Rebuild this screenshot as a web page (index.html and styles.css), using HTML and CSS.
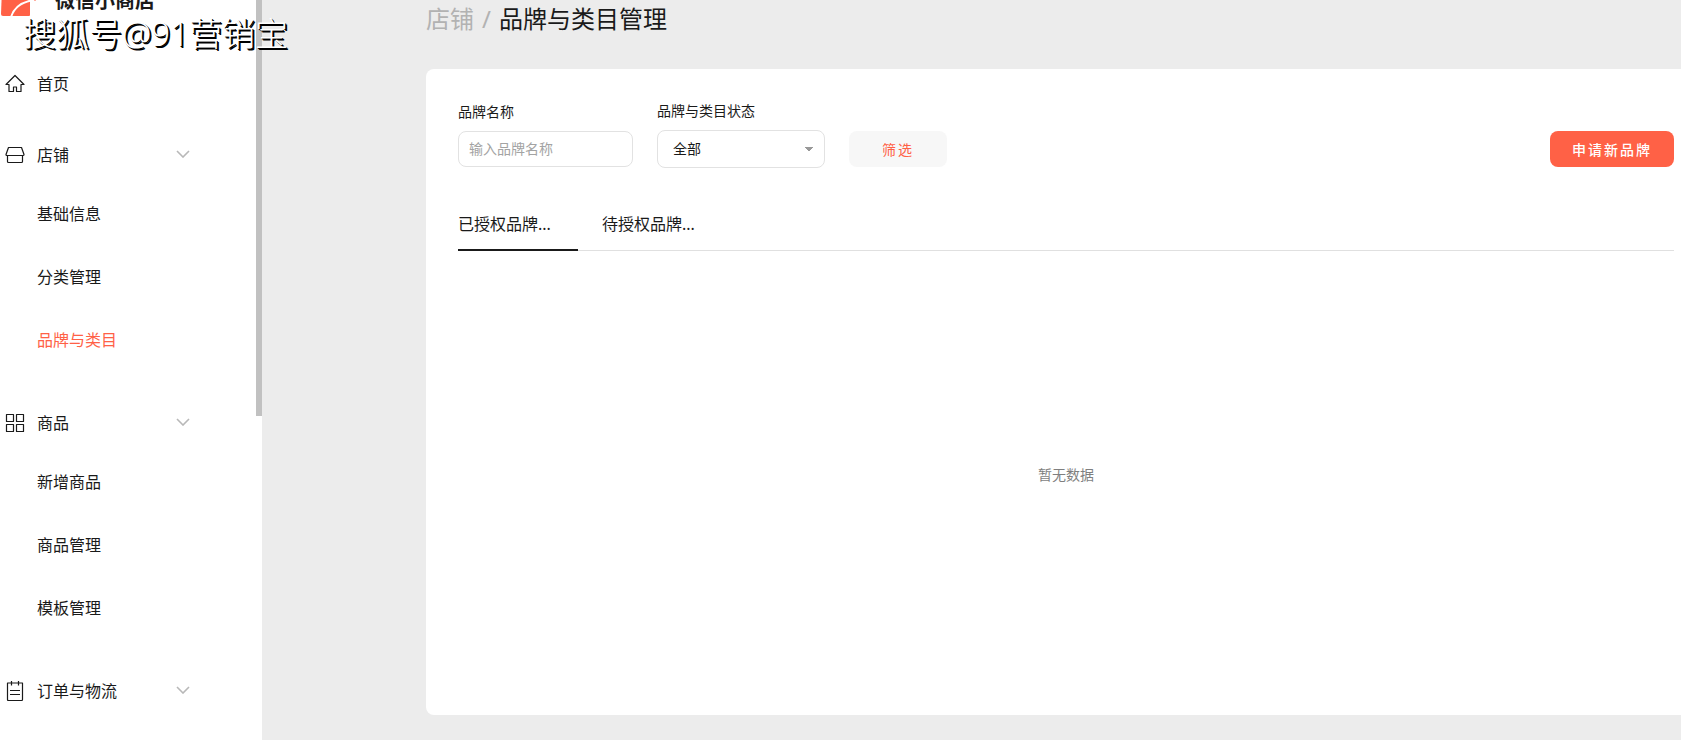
FILE: index.html
```html
<!DOCTYPE html>
<html lang="zh-CN">
<head>
<meta charset="utf-8">
<title>品牌与类目管理</title>
<link rel="stylesheet" href="styles.css">
</head>
<body>
<div class="layout">
  <aside class="sidebar">
    <div class="brand">
      <svg class="brand-logo" width="36" height="32" viewBox="0 0 36 32" aria-hidden="true">
        <path d="M2 4H30V30Q30 31 29 31H3Q1 31 1 29Z" fill="#ff6146"/>
        <path d="M11 32Q15 19 31 15.500" fill="none" stroke="#fff" stroke-width="2"/>
        <path d="M33 14l3 1-1 1z" fill="#ff6146"/>
      </svg>
      <span class="brand-name">微信小商店</span>
    </div>
    <nav class="menu">
      <a class="menu-head" href="#">
        <svg class="icon" width="20" height="20" viewBox="0 0 20 20" aria-hidden="true"><path d="M10 1.500L1 10.500H4V17.500H8.500V13H11.500V17.500H16V10.500H19Z"/></svg>
        <span>首页</span>
      </a>
      <section class="group">
        <button class="menu-head" type="button">
          <svg class="icon" width="20" height="20" viewBox="0 0 20 20" aria-hidden="true"><path d="M3.500 2.500H16.500L19 9.500Q19 10.500 18 10.500H2Q1 10.500 1 9.500ZM2.500 10.500V16.500Q2.500 17.500 3.500 17.500H16.500Q17.500 17.500 17.500 16.500V10.500"/></svg>
          <span>店铺</span>
          <svg class="chevron" width="14" height="8" viewBox="0 0 14 8" aria-hidden="true"><path d="M1 1L7 7L13 1"/></svg>
        </button>
        <ul class="submenu">
          <li><a href="#">基础信息</a></li>
          <li><a href="#">分类管理</a></li>
          <li><a class="active" href="#">品牌与类目</a></li>
        </ul>
      </section>
      <section class="group">
        <button class="menu-head" type="button">
          <svg class="icon" width="20" height="20" viewBox="0 0 20 20" aria-hidden="true"><path d="M1.500 1.500H8.500V8.500H1.500ZM11.500 1.500H18.500V8.500H11.500ZM1.500 11.500H8.500V18.500H1.500ZM11.500 11.500H18.500V18.500H11.500Z"/></svg>
          <span>商品</span>
          <svg class="chevron" width="14" height="8" viewBox="0 0 14 8" aria-hidden="true"><path d="M1 1L7 7L13 1"/></svg>
        </button>
        <ul class="submenu">
          <li><a href="#">新增商品</a></li>
          <li><a href="#">商品管理</a></li>
          <li><a href="#">模板管理</a></li>
        </ul>
      </section>
      <section class="group">
        <button class="menu-head" type="button">
          <svg class="icon" width="20" height="20" viewBox="0 0 20 20" aria-hidden="true"><path d="M2.500 2H17.500V18.500Q17.500 19.500 16.500 19.500H3.500Q2.500 19.500 2.500 18.500ZM6.500 0V4.500M13.500 0V4.500M5 9.500H15M5 13.500H15"/></svg>
          <span>订单与物流</span>
          <svg class="chevron" width="14" height="8" viewBox="0 0 14 8" aria-hidden="true"><path d="M1 1L7 7L13 1"/></svg>
        </button>
      </section>
    </nav>
    <div class="scroll-thumb"></div>
  </aside>
  <main class="main">
    <h1 class="crumbs"><a href="#">店铺</a><span class="slash">/</span><span>品牌与类目管理</span></h1>
    <div class="card">
      <form class="filters">
        <div class="field field-name">
          <label for="brand">品牌名称</label>
          <input id="brand" type="text" placeholder="输入品牌名称">
        </div>
        <div class="field field-state">
          <label for="state">品牌与类目状态</label>
          <select id="state"><option>全部</option></select>
        </div>
        <button class="btn btn-light" type="button">筛选</button>
        <button class="btn btn-primary" type="button">申请新品牌</button>
      </form>
      <div class="tabs" role="tablist">
        <button class="tab selected" type="button" role="tab" aria-selected="true">已授权品牌...</button>
        <button class="tab" type="button" role="tab" aria-selected="false">待授权品牌...</button>
      </div>
      <div class="empty">暂无数据</div>
    </div>
  </main>
</div>
<div class="watermark">搜狐号@91营销宝</div>
</body>
</html>
```
FILE: styles.css
```css
* { box-sizing: border-box; }
body {
  margin: 0;
  background: #ececec;
  color: #1a1a1a;
  font-family: "Noto Sans", "Noto Sans CJK SC", sans-serif;
  font-weight: 400;
  font-size: 16px;
}
a { color: inherit; text-decoration: none; }
button, input, select { font: inherit; color: inherit; margin: 0; }
button { border: 0; background: none; padding: 0; cursor: pointer; }
.layout { display: flex; height: 100vh; overflow: hidden; }

.sidebar { position: relative; flex: 0 0 262px; background: #fff; overflow: hidden; }
.scroll-thumb { position: absolute; top: 0; right: 0; width: 6px; height: 416px; background: #c1c1c1; }
.brand { display: flex; align-items: center; gap: 19px; height: 32px; margin-top: -15px; }
.brand-name { font-size: 20px; font-weight: 700; line-height: 32px; }
.menu { padding-top: 47px; }
.menu-head { display: flex; align-items: center; width: 190px; height: 40px; padding: 0 0 2px 5px; gap: 12px; text-align: left; }
.icon { flex: none; margin-top: 2px; fill: none; stroke: #1a1a1a; stroke-width: 1.2; stroke-linejoin: round; }
.chevron { margin-left: auto; fill: none; stroke: #b8b8b8; stroke-width: 1.6; }
.group { padding-top: 31px; }
.group + .group { padding-top: 31px; }
.submenu { list-style: none; margin: 0; padding: 8px 0 0 37px; }
.submenu a { display: block; height: 63px; line-height: 63px; }
.active { color: #ff6146; }

.main { flex: 1; display: flex; flex-direction: column; min-width: 0; padding: 0 0 25px 164px; }
.crumbs { display: flex; margin: 0; height: 69px; font-size: 24px; font-weight: 400; line-height: 37px; }
.crumbs a { color: #b2b2b2; }
.slash { margin: 0 8px; color: #b2b2b2; }
.card { flex: 1; display: flex; flex-direction: column; padding: 32px 7px 0 32px; background: #fff; border-radius: 8px 0 0 8px; }
.filters { display: flex; align-items: center; font-size: 14px; }
.field { display: flex; flex-direction: column; gap: 9px; }
.field label { line-height: 20px; }
.field input, .field select { width: 100%; border: 1px solid #e2e2e2; border-radius: 8px; background: #fff; }
.field input { height: 36px; padding: 0 10px 2px; }
.field input::placeholder { color: #a3a3a3; opacity: 1; }
.field select {
  height: 38px;
  padding: 0 15px 2px;
  appearance: none;
  background: linear-gradient(to bottom right, #999 50%, transparent 51%) right 11px center / 4px 5px no-repeat,
    linear-gradient(to bottom left, #999 50%, transparent 51%) right 15px center / 4px 5px no-repeat, #fff;
}
.field-name { width: 175px; margin-right: 24px; }
.field-state { width: 168px; margin-right: 24px; }
.btn { height: 36px; margin-top: 29px; border-radius: 8px; font-size: 14px; letter-spacing: 2px; }
.btn-light { width: 98px; background: #f7f7f7; color: #ff6146; font-weight: 400; }
.btn-primary { width: 124px; margin-left: auto; background: #ff6146; color: #fff; font-weight: 500; }
.tabs { display: flex; gap: 24px; margin-top: 31px; border-bottom: 1px solid #e0e0e0; }
.tab { width: 120px; height: 52px; padding-bottom: 2px; text-align: left; margin-bottom: -1px; border-bottom: 2px solid transparent; }
.tab.selected { border-bottom-color: #1a1a1a; }
.empty { flex: 1; display: flex; align-items: center; justify-content: center; padding-bottom: 18px; font-size: 14px; color: #7f7f7f; }

.watermark {
  position: absolute;
  top: 10px;
  left: 23px;
  font-size: 33px;
  line-height: 48px;
  font-weight: 300;
  color: #fff;
  text-shadow: 1px 1px 0 #000, 2px 2px 0 #000;
  white-space: nowrap;
}
```
